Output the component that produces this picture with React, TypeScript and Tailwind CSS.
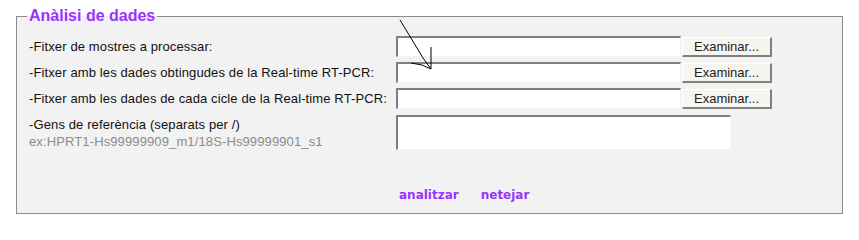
import React from 'react';

const purple = 'text-[#9933ff]';

const FileRow: React.FC<{label: string}> = ({label}) => {
    return (
        <div className="flex items-center h-[21px]">
            <span className="w-[367px] shrink-0 whitespace-nowrap tracking-[0.12px]">{label}</span>
            <input
                type="text"
                className="w-[285px] h-[21px] bg-white border-t-2 border-l-2 border-r border-b border-t-[#808080] border-l-[#808080] border-r-[#f4f4f4] border-b-[#f4f4f4] outline-none"
            />
            <button
                type="button"
                className="ml-px w-[90px] h-[20px] bg-[#f7f5f0] border-t border-l border-r-2 border-b-2 border-t-white border-l-white border-r-[#808080] border-b-[#808080] text-[13px] leading-none text-[#222]"
            >
                Examinar...
            </button>
        </div>
    );
};

const App: React.FC = () => {
    return (
        <div className="relative w-[859px] h-[229px] bg-white pt-[7px] px-4 font-['Liberation_Sans',Arial,sans-serif] text-[13px] text-[#111]">
            <fieldset className="border border-[#8a8a8a] bg-[#f2f2f2] pl-3 pr-3 h-[207px]">
                <legend className={`-ml-[2px] px-[2px] text-[16px] font-bold leading-[18px] ${purple}`}>
                    Anàlisi de dades
                </legend>
                <div className="flex flex-col gap-[5px] mt-[11px]">
                    <FileRow label="-Fitxer de mostres a processar:"/>
                    <FileRow label="-Fitxer amb les dades obtingudes de la Real-time RT-PCR:"/>
                    <FileRow label="-Fitxer amb les dades de cada cicle de la Real-time RT-PCR:"/>
                    <div className="flex mt-px">
                        <div className="w-[367px] shrink-0 pt-px leading-[17px] tracking-[0.12px]">
                            <div>-Gens de referència (separats per /)</div>
                            <div className="text-[#8c8c8c]">ex:HPRT1-Hs99999909_m1/18S-Hs99999901_s1</div>
                        </div>
                        <textarea
                            className="w-[335px] h-[35px] bg-white resize-none border-t-2 border-l-2 border-r border-b border-t-[#808080] border-l-[#808080] border-r-[#f4f4f4] border-b-[#f4f4f4] outline-none"
                        />
                    </div>
                </div>
                <div className={`flex gap-[22px] pl-[370px] mt-[39px] font-['DejaVu_Sans',sans-serif] text-[12px] font-bold leading-none ${purple}`}>
                    <a href="#">analitzar</a>
                    <a href="#">netejar</a>
                </div>
            </fieldset>
            <svg className="absolute left-0 top-0 pointer-events-none" width="859" height="229">
                <path d="M400 20 L414 43 L423 58 L431 69" stroke="#000" strokeWidth="1" fill="none"/>
                <path d="M431 47 L431 69 M411 63 L422 65 L431 69" stroke="#000" strokeWidth="1" fill="none"/>
            </svg>
        </div>
    );
};

export default App;
